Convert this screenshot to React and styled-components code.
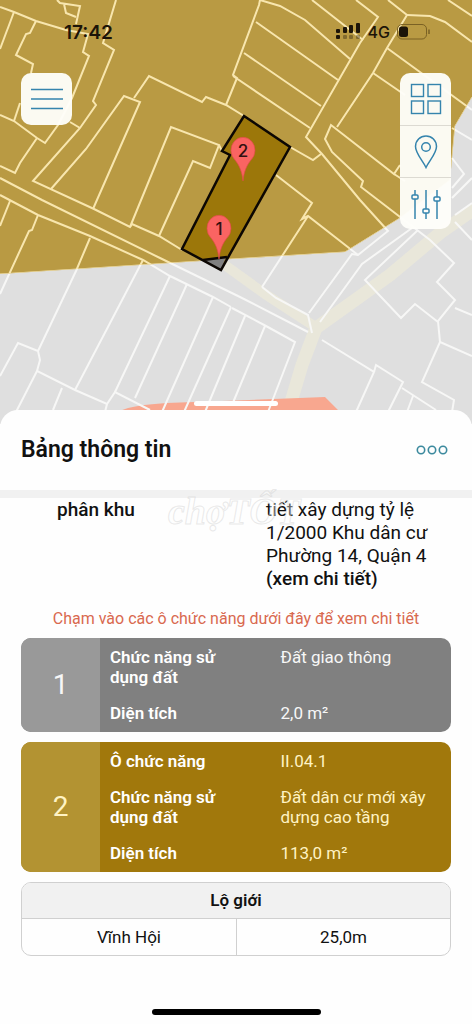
import React from 'react'
import styled, { createGlobalStyle } from 'styled-components';

const GlobalStyle = createGlobalStyle`
    * {
        box-sizing: border-box;
    }
    body {
        margin: 0;
        background-color: #fefefe;
        color: #111;
        font-family: Roboto, "Noto Sans", sans-serif;
    }
    button {
        font-family: inherit;
        border: none;
        padding: 0;
        cursor: pointer;
    }
`

const Page = styled.div`
    min-height: 100vh;
    display: flex;
    flex-direction: column;
`

// Map starts
const MapArea = styled.section`
    height: calc(40vh + 14px);
    position: relative;
    overflow: hidden;
    flex-shrink: 0;
`
const MapDrawing = styled.svg`
    position: absolute;
    top: 0;
    left: 0;
    width: 100%;
    height: 100%;
`
const MapOverlay = styled.div`
    position: relative;
    height: 100%;
    display: flex;
    flex-direction: column;
`
const StatusBar = styled.div`
    height: 64px;
    padding: 0 41px 0 64px;
    display: flex;
    align-items: center;
    justify-content: space-between;
    font-family: Inter, Roboto, sans-serif;
    color: #1c1408;
`
const Time = styled.span`
    font-size: 19px;
    font-weight: 600;
`
const Signals = styled.div`
    display: flex;
    align-items: center;
    gap: 7px;
    font-size: 16px;
    font-weight: 500;
`
const Controls = styled.div`
    padding: 9px 21px;
    display: flex;
    align-items: flex-start;
    justify-content: space-between;
`
const ControlGroup = styled.div`
    width: 51px;
    display: flex;
    flex-direction: column;
    border-radius: 10px;
    overflow: hidden;
    background-color: rgba(254, 254, 250, 0.96);
`
const ControlButton = styled.button`
    height: 52px;
    display: flex;
    align-items: center;
    justify-content: center;
    background: none;
    color: #3584ad;

    & + & {
        border-top: 1px solid #dcdad2;
    }
`
const Handle = styled.div`
    width: 84px;
    height: 5px;
    margin: auto auto 18px;
    border-radius: 3px;
    background-color: #fff;
`

// Panel starts
const Panel = styled.main`
    flex: 1;
    margin-top: -14px;
    position: relative;
    display: flex;
    flex-direction: column;
    border-radius: 18px 18px 0 0;
    background-color: #fefefe;
`
const PanelHeader = styled.header`
    height: 88px;
    padding: 0 24px 0 21px;
    display: flex;
    align-items: center;
    justify-content: space-between;
    border-bottom: 8px solid #f1f1f1;
`
const Title = styled.h1`
    margin: 0;
    font-size: 23px;
    font-weight: 600;
`
const MoreButton = styled.button`
    background: none;
    color: #3c8a9e;
    display: flex;
`
const Watermark = styled.div`
    position: absolute;
    top: 76px;
    left: 168px;
    font-family: "Liberation Serif", serif;
    font-style: italic;
    font-weight: bold;
    font-size: 38px;
    line-height: 50px;
    color: rgba(255, 255, 255, 0.4);
    -webkit-text-stroke: 1px rgba(200, 200, 200, 0.4);
    pointer-events: none;
`
const Content = styled.div`
    padding: 0 21px;
    display: flex;
    flex-direction: column;
`
const Summary = styled.dl`
    margin: 0;
    padding-left: 36px;
    display: grid;
    grid-template-columns: 209fr 185fr;
    font-size: 19px;
    line-height: 23px;
`
const SummaryLabel = styled.dt`
    font-weight: 500;
`
const SummaryValue = styled.dd`
    margin: 0;
`
const DetailLink = styled.a`
    display: block;
    font-weight: 500;
    color: inherit;
    text-decoration: none;
`
const Hint = styled.p`
    margin: 18px 0 8px;
    font-size: 16px;
    line-height: 22px;
    text-align: center;
    color: #d9694f;
`
const Zone = styled.button`
    margin-bottom: 10px;
    display: grid;
    grid-template-columns: 79px 1fr;
    border-radius: 10px;
    overflow: hidden;
    text-align: left;
    color: ${props => props.$ink};
    background-color: ${props => props.$color};
`
const ZoneNumber = styled.span`
    height: 100%;
    display: flex;
    align-items: center;
    justify-content: center;
    font-size: 28px;
    background-color: ${props => props.$color};
`
const ZoneRows = styled.span`
    padding: 9px 10px;
    display: grid;
    grid-template-columns: 171fr 161fr;
    row-gap: 16px;
    font-size: 17px;
    line-height: 20px;
`
const ZoneLabel = styled.span`
    padding-right: 50px;
    font-weight: 600;
    color: #fff;
`
const ZoneValue = styled.span``

const RoadTable = styled.table`
    width: 100%;
    table-layout: fixed;
    border-collapse: separate;
    border-spacing: 0;
    border: 1px solid #d0d0d0;
    border-radius: 10px;
    overflow: hidden;
    font-size: 17px;
    text-align: center;
`
const RoadHead = styled.th`
    height: 35px;
    padding: 0;
    font-weight: 600;
    background-color: #f1f1f1;
`
const RoadCell = styled.td`
    height: 37px;
    padding: 0;
    border-top: 1px solid #d0d0d0;

    & + & {
        border-left: 1px solid #d0d0d0;
    }
`
const HomeBar = styled.div`
    width: 169px;
    height: 6px;
    margin: auto auto 9px;
    border-radius: 3px;
    background-color: #000;
`

const ochreArea = "M0 0H472V97L455 126L450 180L400 218L345 252L232 259L0 274Z"

const parcelLines = [
    "M0 7L14 12L36 21L66 30L88 34L83 52L89 56L72 98L58 125L45 143L37 138L14 121L0 115",
    "M14 12L0 49",
    "M36 21L30 33L26 34L16 55L33 64L31 73",
    "M20 103L14 121",
    "M57 0L60 3L80 6L76 24M64 4L66 13L76 17",
    "M116 0L103 43L114 50L93 101L96 105L80 128L33 181L94 209L130 227L132 224L159 236L182 250",
    "M70 122L80 128",
    "M37 138L20 163L15 173L0 166",
    "M51 189L86 149L124 96L140 102L93 209",
    "M134 98L149 76L202 102L206 97L226 105L244 116",
    "M130 227L171 127L219 145L210 168L193 161L159 236",
    "M219 145L222 151",
    "M260 0L259 5L233 75L237 78L226 105",
    "M260 0L280 6L305 20L350 59",
    "M256 22L338 80M244 53L321 106M233 76L310 128M312 0L363 40",
    "M356 0L378 17L360 43L306 137L322 154L360 200L388 231L358 255L352 254L309 313",
    "M388 0L407 15L387 48L373 73L337 127",
    "M407 15L430 16L445 22L472 42M448 0L472 16",
    "M387 48L472 110M373 73L405 95M452 128L472 140",
    "M400 165L394 174L331 125L325 139L332 152L363 181L361 187L378 200L430 240L454 263L437 282L455 300L438 321L440 342L472 356",
    "M394 174L405 181M452 158L464 174L452 188M472 178L452 198",
    "M290 147L313 160L321 154",
    "M276 175L312 203L302 219L308 216L358 255M308 216L262 287",
    "M0 178L42 200L160 258L240 297L308 332",
    "M0 195L38 215L90 236L143 260L170 276L213 297L231 307",
    "M10 201L0 226",
    "M38 215L32 230L29 231L0 294",
    "M90 238L76 271L38 351",
    "M143 260L75 390M170 276L115 392M187 284L135 398M213 297L162 412M231 307L184 412",
    "M0 376L18 343L38 351L40 360L37 371L75 390L107 404L115 392L150 410",
    "M37 371L16 412M62 388L53 410M107 404L105 412",
    "M232 308L266 326L295 342L268 412M245 316L205 412M265 326L232 405",
    "M262 287L276 298L308 315L312 333",
    "M320 322L362 264L412 228",
    "M418 230L365 280L401 318L415 304L438 322",
    "M455 308L472 315M455 222L472 240M455 215L472 203",
    "M440 342L422 382L454 400L452 412",
    "M322 340L374 372L356 412M374 372L376 365L403 382L388 412M402 388L436 410M413 396L407 412",
]

const Pin = ({ x, y, label }) => (
    <g transform={`translate(${x} ${y})`}>
        <path d="M0 30C-1 20-4 14-8 9A12 13 0 1 1 8 9C4 14 1 20 0 30Z" fill="#fa6462" stroke="#e04e46" strokeWidth="0.7" />
        <text y="6" textAnchor="middle" fontFamily="Inter, sans-serif" fontSize="17" fontWeight="500" fill="#321010">{label}</text>
    </g>
)

const LandMap = () => (
    <MapDrawing viewBox="0 0 472 424" preserveAspectRatio="xMidYMin slice" role="img" aria-label="Bản đồ quy hoạch">
        <defs>
            <clipPath id="ochre">
                <path d={ochreArea} />
            </clipPath>
        </defs>
        <rect width="472" height="424" fill="#dfdfdf" />
        {/* roads */}
        <g fill="none" stroke="#e9e7da" strokeLinejoin="round">
            <path d="M222 263L265 294L314 326" strokeWidth="10" />
            <path d="M480 205L440 233L390 275L316 328L302 365L288 412" strokeWidth="13" />
        </g>
        <path d="M118 412Q132 403 195 402L325 397L340 412Z" fill="#f8a78f" />
        <g fill="none" stroke="#f7f7f6" strokeWidth="2">
            {parcelLines.map(d => <path key={d} d={d} />)}
        </g>
        <path d={ochreArea} fill="#b99a43" />
        <g fill="none" stroke="#f8e6ae" strokeWidth="2" clipPath="url(#ochre)">
            {parcelLines.map(d => <path key={d} d={d} />)}
            <path d="M472 97L455 126L450 180L400 218L345 252L232 259L0 274" strokeWidth="1" />
        </g>
        {/* selected lot */}
        <path d="M244 116L290 147L221 270L182 249L230 155L222 151Z" fill="#9c770a" />
        <path d="M203 260L226 257L221 270Z" fill="#808080" />
        <path d="M203 260L227 257M244 116L290 147L221 270L182 249L230 155L222 151Z" fill="none" stroke="#0c0703" strokeWidth="2.5" />
        <Pin x={243} y={151} label="2" />
        <Pin x={219} y={229} label="1" />
    </MapDrawing>
)

const SignalIcon = () => (
    <svg width="25" height="18" viewBox="0 0 25 18" fill="currentColor">
        <rect x="0" y="6" width="4" height="4" rx="1" />
        <rect x="7" y="4" width="4" height="6" rx="1" />
        <rect x="13" y="2" width="4" height="8" rx="1" />
        <rect x="20" y="0" width="4" height="10" rx="1" />
        <rect x="0" y="12" width="4" height="4" rx="1" />
        <g opacity="0.35">
            <rect x="7" y="12" width="4" height="4" rx="1" />
            <rect x="13" y="12" width="4" height="4" rx="1" />
            <rect x="20" y="12" width="4" height="4" rx="1" />
        </g>
    </svg>
)

const BatteryIcon = () => (
    <svg width="34" height="16" viewBox="0 0 34 16">
        <rect x="0.5" y="0.5" width="29" height="14.5" rx="4.5" fill="none" stroke="#7a6124" />
        <rect x="2" y="2.5" width="9" height="10.5" rx="2.5" fill="currentColor" />
        <path d="M32 5.5V10" stroke="#7a6124" strokeWidth="1.5" />
    </svg>
)

const MenuIcon = () => (
    <svg width="32" height="22" viewBox="0 0 32 22" stroke="currentColor" strokeWidth="1.7">
        <path d="M0 1.5H32M0 11H32M0 20.5H32" />
    </svg>
)

const GridIcon = () => (
    <svg width="32" height="32" viewBox="0 0 32 32" fill="none" stroke="currentColor" strokeWidth="1.4">
        <rect x="1.5" y="1.5" width="12" height="12" />
        <rect x="18" y="1.5" width="12.5" height="12" />
        <rect x="1.5" y="18" width="12" height="12.5" />
        <rect x="18" y="18" width="12.5" height="12.5" />
    </svg>
)

const PlaceIcon = () => (
    <svg width="24" height="34" viewBox="0 0 24 34" fill="none" stroke="currentColor" strokeWidth="1.5">
        <path d="M12 32.5C9 26 1.5 18.5 1.5 11.5A10.5 10.5 0 0 1 22.5 11.5C22.5 18.5 15 26 12 32.5Z" />
        <circle cx="12" cy="12" r="4.3" />
    </svg>
)

const FilterIcon = () => (
    <svg width="30" height="32" viewBox="0 0 30 32" fill="none" stroke="currentColor" strokeWidth="1.5">
        <path d="M4 2V7M4 11V31M15 2V21M15 25V31M26 2V9M26 13V31" />
        <rect x="1" y="7" width="6" height="4" rx="1" />
        <rect x="12" y="21" width="6" height="4" rx="1" />
        <rect x="23" y="9" width="6" height="4" rx="1" />
    </svg>
)

const MoreIcon = () => (
    <svg width="32" height="10" viewBox="0 0 32 10" fill="none" stroke="currentColor" strokeWidth="1.6">
        <circle cx="5" cy="5" r="3.7" />
        <circle cx="16" cy="5" r="3.7" />
        <circle cx="27" cy="5" r="3.7" />
    </svg>
)

const zones = [
    {
        id: 1,
        color: '#808080',
        side: '#999999',
        ink: '#f7f7f7',
        rows: [
            ['Chức năng sử dụng đất', 'Đất giao thông'],
            ['Diện tích', '2,0 m²'],
        ],
    },
    {
        id: 2,
        color: '#a1780c',
        side: '#b39332',
        ink: '#fff3c4',
        rows: [
            ['Ô chức năng', 'II.04.1'],
            ['Chức năng sử dụng đất', 'Đất dân cư mới xây dựng cao tầng'],
            ['Diện tích', '113,0 m²'],
        ],
    },
]

const App = () => {
    return (
        <Page>
            <GlobalStyle />
            <MapArea>
                <LandMap />
                <MapOverlay>
                    <StatusBar>
                        <Time>17:42</Time>
                        <Signals>
                            <SignalIcon />
                            4G
                            <BatteryIcon />
                        </Signals>
                    </StatusBar>
                    <Controls>
                        <ControlGroup>
                            <ControlButton aria-label="Menu"><MenuIcon /></ControlButton>
                        </ControlGroup>
                        <ControlGroup>
                            <ControlButton aria-label="Lớp bản đồ"><GridIcon /></ControlButton>
                            <ControlButton aria-label="Vị trí"><PlaceIcon /></ControlButton>
                            <ControlButton aria-label="Bộ lọc"><FilterIcon /></ControlButton>
                        </ControlGroup>
                    </Controls>
                    <Handle />
                </MapOverlay>
            </MapArea>
            <Panel>
                <PanelHeader>
                    <Title>Bảng thông tin</Title>
                    <MoreButton aria-label="Thêm"><MoreIcon /></MoreButton>
                </PanelHeader>
                <Content>
                    <Summary>
                        <SummaryLabel>phân khu</SummaryLabel>
                        <SummaryValue>
                            tiết xây dựng tỷ lệ 1/2000 Khu dân cư Phường 14, Quận 4
                            <DetailLink href="#chi-tiet">(xem chi tiết)</DetailLink>
                        </SummaryValue>
                    </Summary>
                    <Hint>Chạm vào các ô chức năng dưới đây để xem chi tiết</Hint>
                    {zones.map(zone => (
                        <Zone key={zone.id} $color={zone.color} $ink={zone.ink}>
                            <ZoneNumber $color={zone.side}>{zone.id}</ZoneNumber>
                            <ZoneRows>
                                {zone.rows.map(([label, value]) => (
                                    <React.Fragment key={label}>
                                        <ZoneLabel>{label}</ZoneLabel>
                                        <ZoneValue>{value}</ZoneValue>
                                    </React.Fragment>
                                ))}
                            </ZoneRows>
                        </Zone>
                    ))}
                    <RoadTable>
                        <thead>
                            <tr>
                                <RoadHead colSpan={2}>Lộ giới</RoadHead>
                            </tr>
                        </thead>
                        <tbody>
                            <tr>
                                <RoadCell>Vĩnh Hội</RoadCell>
                                <RoadCell>25,0m</RoadCell>
                            </tr>
                        </tbody>
                    </RoadTable>
                </Content>
                <Watermark aria-hidden="true">chợTỐT</Watermark>
                <HomeBar />
            </Panel>
        </Page>
    )
}

export default App
